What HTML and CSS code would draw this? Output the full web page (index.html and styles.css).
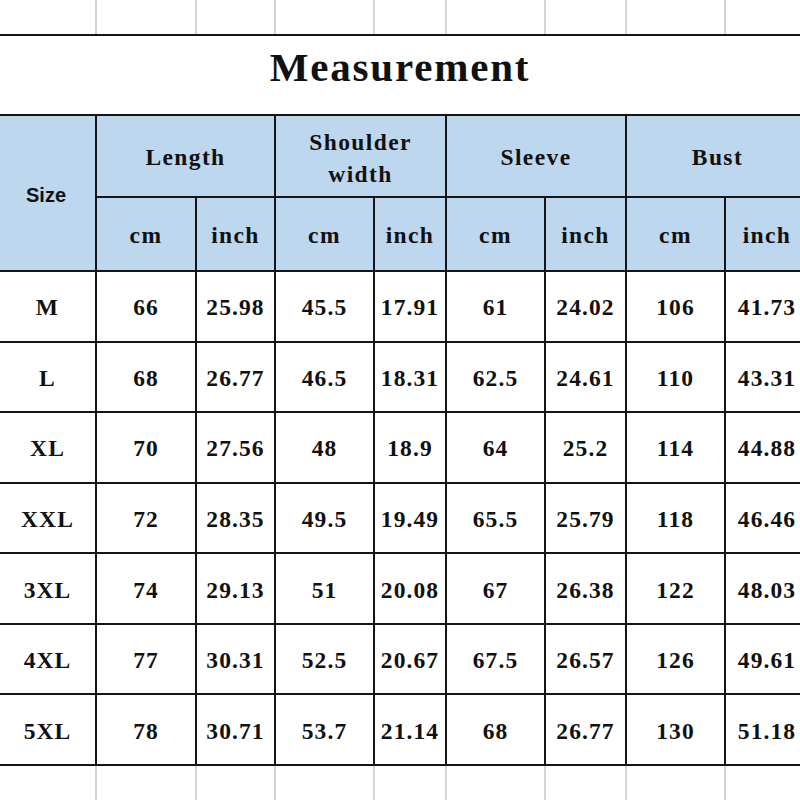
FILE: index.html
```html
<!DOCTYPE html>
<html>
<head>
<meta charset="utf-8">
<link rel="stylesheet" href="styles.css">
</head>
<body>
<div class="sheet">
  <div class="grid faint">
    <div></div><div></div><div></div><div></div><div></div><div></div><div></div><div></div><div></div>
  </div>
  <div class="grid table">
    <div class="cell title">Measurement</div>
    <div class="cell head size">Size</div>
    <div class="cell head span2">Length</div>
    <div class="cell head span2 two">Shoulder<br>width</div>
    <div class="cell head span2">Sleeve</div>
    <div class="cell head span2">Bust</div>
    <div class="cell head">cm</div><div class="cell head">inch</div>
    <div class="cell head">cm</div><div class="cell head">inch</div>
    <div class="cell head">cm</div><div class="cell head">inch</div>
    <div class="cell head">cm</div><div class="cell head">inch</div>

    <div class="cell">M</div><div class="cell">66</div><div class="cell">25.98</div><div class="cell">45.5</div><div class="cell">17.91</div><div class="cell">61</div><div class="cell">24.02</div><div class="cell">106</div><div class="cell">41.73</div>
    <div class="cell">L</div><div class="cell">68</div><div class="cell">26.77</div><div class="cell">46.5</div><div class="cell">18.31</div><div class="cell">62.5</div><div class="cell">24.61</div><div class="cell">110</div><div class="cell">43.31</div>
    <div class="cell">XL</div><div class="cell">70</div><div class="cell">27.56</div><div class="cell">48</div><div class="cell">18.9</div><div class="cell">64</div><div class="cell">25.2</div><div class="cell">114</div><div class="cell">44.88</div>
    <div class="cell">XXL</div><div class="cell">72</div><div class="cell">28.35</div><div class="cell">49.5</div><div class="cell">19.49</div><div class="cell">65.5</div><div class="cell">25.79</div><div class="cell">118</div><div class="cell">46.46</div>
    <div class="cell">3XL</div><div class="cell">74</div><div class="cell">29.13</div><div class="cell">51</div><div class="cell">20.08</div><div class="cell">67</div><div class="cell">26.38</div><div class="cell">122</div><div class="cell">48.03</div>
    <div class="cell">4XL</div><div class="cell">77</div><div class="cell">30.31</div><div class="cell">52.5</div><div class="cell">20.67</div><div class="cell">67.5</div><div class="cell">26.57</div><div class="cell">126</div><div class="cell">49.61</div>
    <div class="cell">5XL</div><div class="cell">78</div><div class="cell">30.71</div><div class="cell">53.7</div><div class="cell">21.14</div><div class="cell">68</div><div class="cell">26.77</div><div class="cell">130</div><div class="cell">51.18</div>
  </div>
  <div class="grid faint">
    <div></div><div></div><div></div><div></div><div></div><div></div><div></div><div></div><div></div>
  </div>
</div>
</body>
</html>
```

FILE: styles.css
```css
html, body {
  margin: 0;
  padding: 0;
  background: #fff;
}

.sheet {
  width: 800px;
  height: 800px;
  overflow: hidden;
  font-family: "Liberation Serif", "Times New Roman", serif;
  color: #111;
}

.grid {
  display: grid;
  grid-template-columns: 95px 98px 77px 97px 70px 97px 79px 97px 82px;
  column-gap: 2px;
  width: 811px;
}

.faint {
  height: 34px;
  background: #d4d4d4;
}

.faint > div {
  background: #fff;
}

.table {
  background: #151515;
  row-gap: 2px;
  border-top: 2px solid #151515;
  border-bottom: 2px solid #151515;
  grid-template-rows: 78px 80px 72px repeat(7, 68.57px);
}

.cell {
  background: #fff;
  display: flex;
  align-items: center;
  justify-content: center;
  font-weight: bold;
  font-size: 23.5px;
  letter-spacing: 1.1px;
  text-align: center;
  padding-top: 3px;
  box-sizing: border-box;
}

.title {
  grid-column: 1 / -1;
  font-size: 41px;
  letter-spacing: 1.8px;
  padding-top: 0;
  padding-right: 8px;
  padding-bottom: 16px;
}

.head {
  background: #bdd7ee;
  letter-spacing: 1.4px;
}

.size {
  grid-row: span 2;
  font-family: "Liberation Sans", Arial, sans-serif;
  font-size: 20px;
  letter-spacing: 0;
  justify-content: flex-start;
  padding-left: 26px;
  padding-top: 5px;
}

.span2 {
  grid-column: span 2;
}

.two {
  line-height: 32px;
  padding-top: 3px;
  padding-bottom: 0;
}
```
